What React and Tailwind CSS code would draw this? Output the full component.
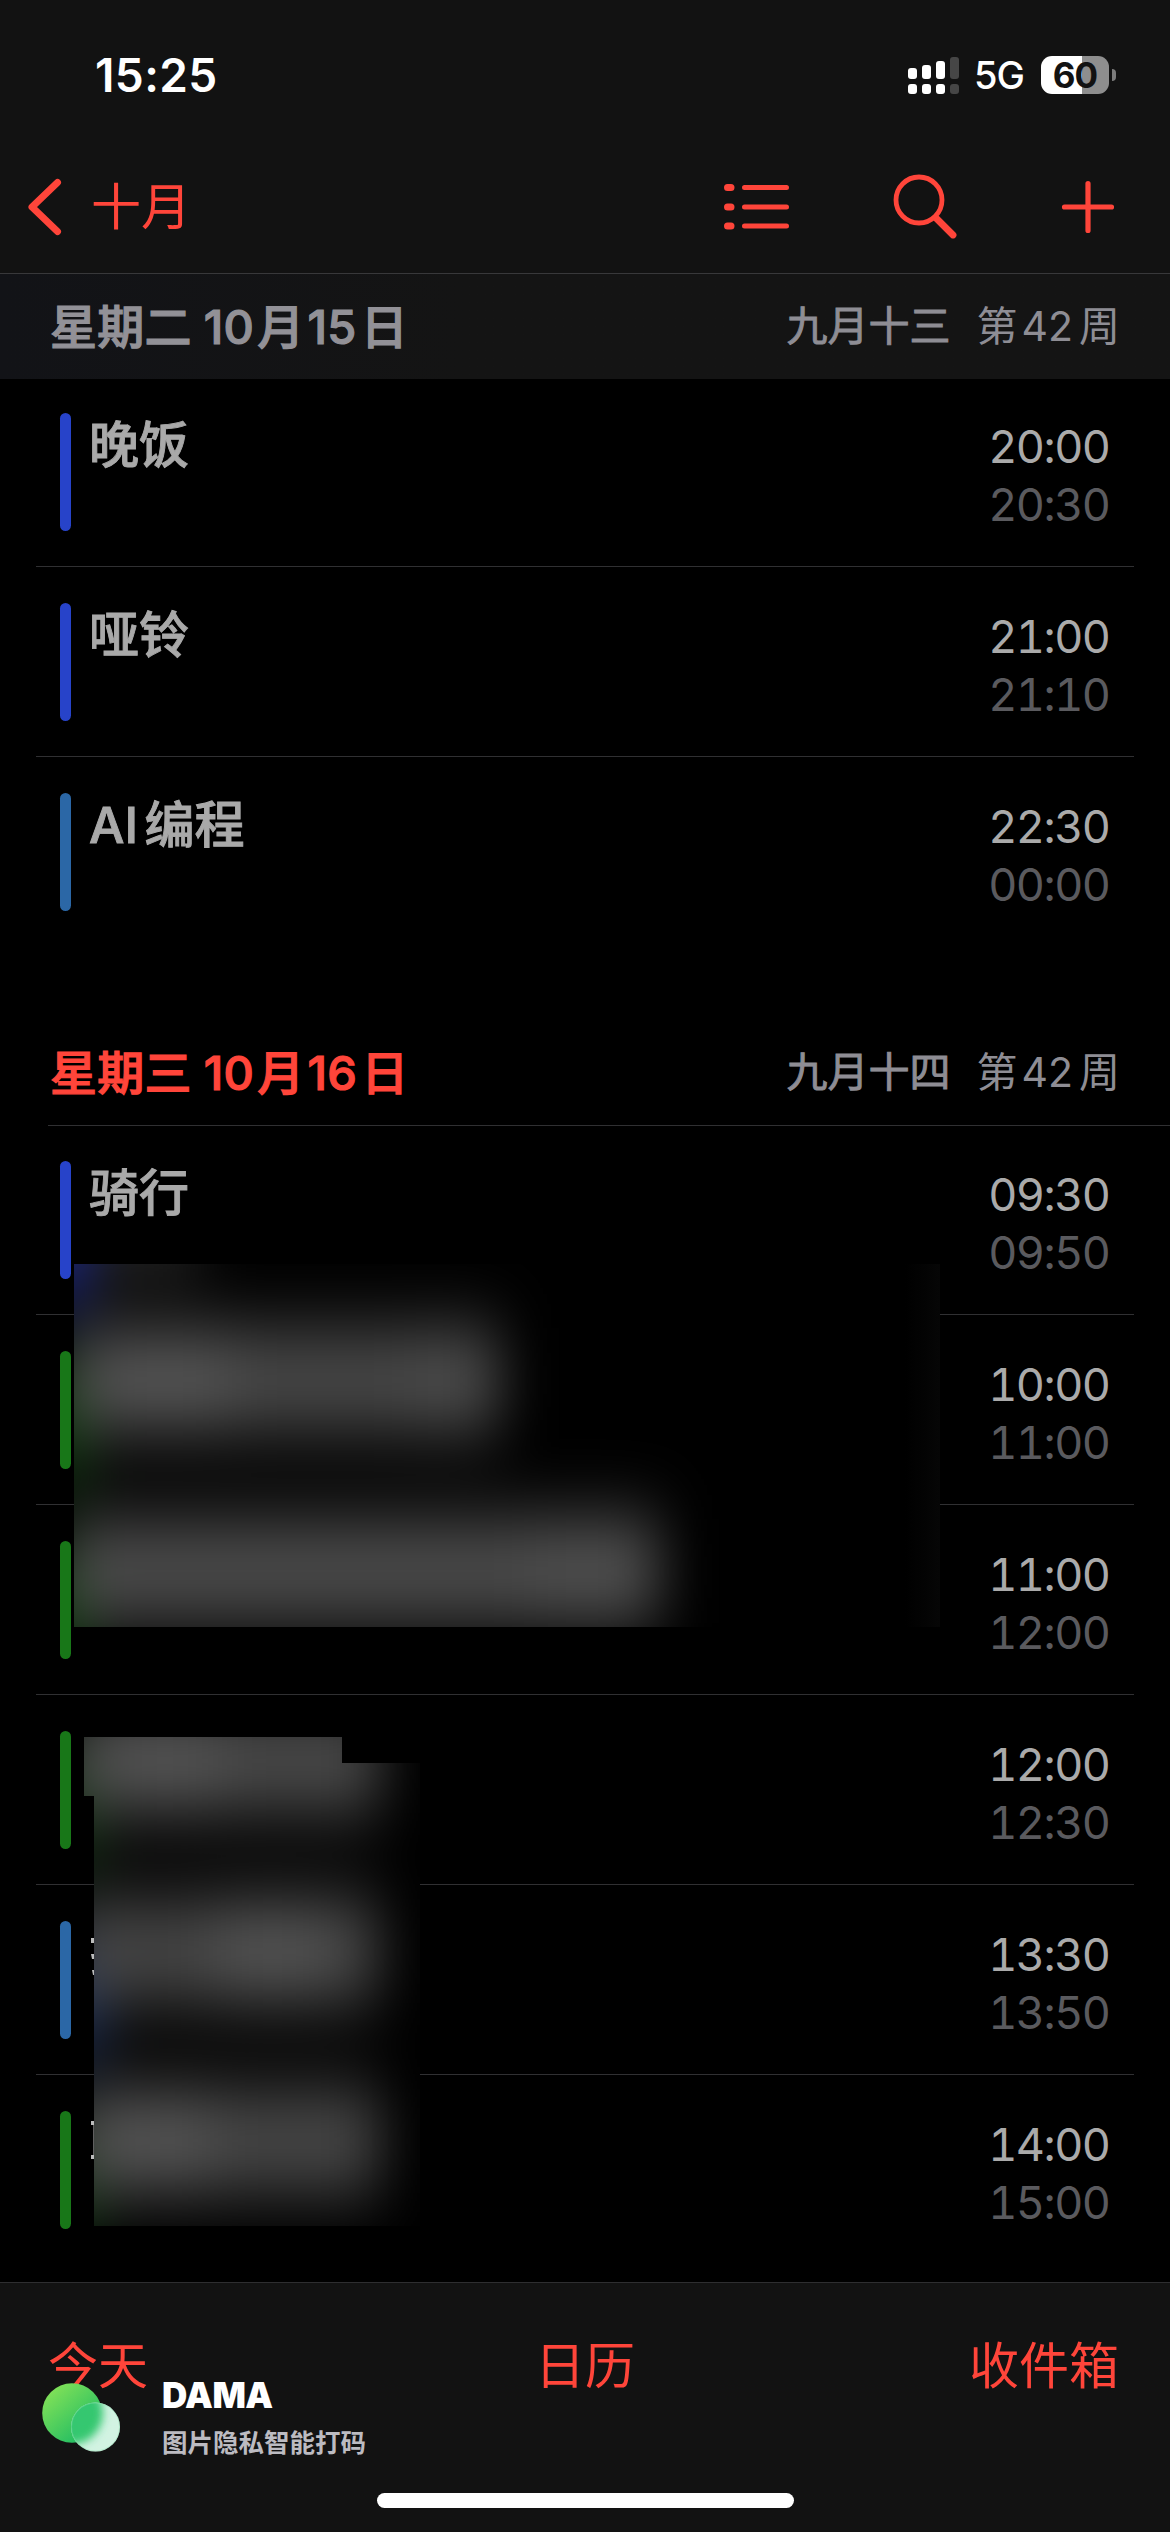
import { cva } from "class-variance-authority";

const sections = [
  {
    id: "1015",
    weekday: "星期二",
    month: "10",
    day: "15",
    lunar: "九月十三",
    week: "42",
    events: [
      { title: "晚饭", start: "20:00", end: "20:30", color: "blue" },
      { title: "哑铃", start: "21:00", end: "21:10", color: "blue" },
      { title: "AI 编程", start: "22:30", end: "00:00", color: "sky" },
    ],
  },
  {
    id: "1016",
    weekday: "星期三",
    month: "10",
    day: "16",
    lunar: "九月十四",
    week: "42",
    today: true,
    events: [
      { title: "骑行", start: "09:30", end: "09:50", color: "blue" },
      { start: "10:00", end: "11:00", color: "green" },
      { start: "11:00", end: "12:00", color: "green" },
      { start: "12:00", end: "12:30", color: "green" },
      { start: "13:30", end: "13:50", color: "sky" },
      { start: "14:00", end: "15:00", color: "green" },
    ],
  },
];

const bar = cva("ml-6 mt-9 h-[118px] w-[11px] shrink-0 rounded-full", {
  variants: {
    color: {
      blue: "bg-[#2743c9]",
      sky: "bg-[#2b67a6]",
      green: "bg-[#187718]",
    },
  },
});

const dayTitle = cva("text-[47px] font-medium leading-none tracking-[0.3px] [-webkit-text-stroke:1.2px_currentColor] [word-spacing:-1px]", {
  variants: {
    today: {
      true: "text-[#ff453a]",
      false: "text-[#929197]",
    },
  },
});

export default function App() {
  return (
    <div className="relative flex h-[2532px] w-[1170px] flex-col overflow-hidden bg-black font-['Inter','Noto_Sans_CJK_SC',sans-serif]">
      <header className="h-[274px] shrink-0 border-b border-[#38383a] bg-[#121212]">
        <StatusBar />
        <NavBar />
      </header>

      <main className="relative min-h-0 flex-1 overflow-hidden">
        {sections.map((s) => (
          <DaySection key={s.id} section={s} />
        ))}
        <Redactions />
      </main>

      <Toolbar />
      <Watermark />
    </div>
  );
}

function StatusBar() {
  return (
    <div className="flex h-[150px] items-center justify-between pl-[95px] pr-[54px]">
      <span className="text-[46px] font-semibold leading-none tracking-[0.4px] text-white">15:25</span>
      <div className="flex items-center">
        <svg className="h-[38px] w-[52px]" viewBox="0 0 52 38" fill="#fff">
          <rect x="0" y="12" width="9" height="11" rx="3" />
          <rect x="14" y="9" width="9" height="14" rx="3" />
          <rect x="28" y="5" width="9" height="18" rx="3" />
          <rect x="42" y="1" width="9" height="22" rx="3" opacity=".22" />
          <rect x="0" y="28" width="9" height="10" rx="3" />
          <rect x="14" y="28" width="9" height="10" rx="3" />
          <rect x="28" y="28" width="9" height="10" rx="3" />
          <rect x="42" y="28" width="9" height="10" rx="3" opacity=".22" />
        </svg>
        <span className="ml-[14px] w-[50px] text-[38px] font-medium leading-none tracking-[-1px] text-white">5G</span>
        <div className="ml-[17px] flex h-[38px] w-[68px] items-center justify-center rounded-[11px] bg-linear-to-r from-white from-60% to-[#8e8e8e] to-60%">
          <span className="text-[35px] font-bold leading-none tracking-[-1px] text-[#121212]">60</span>
        </div>
        <div className="ml-[3px] h-3 w-1 rounded-r-full bg-[#7c7c7c]" />
      </div>
    </div>
  );
}

function NavBar() {
  return (
    <nav className="flex h-[114px] items-center text-[#ff453a]">
      <svg className="ml-[26px] h-[64px] w-[40px]" viewBox="0 0 40 64" fill="none" stroke="currentColor" strokeWidth="7" strokeLinecap="round" strokeLinejoin="round">
        <path d="M31.5 7.5 6 32l25.500 24.500" />
      </svg>
      <span className="ml-[25px] text-[50px] leading-none">十月</span>

      <div className="ml-auto flex items-center pr-[55px]">
        <svg className="h-[64px] w-[66px]" viewBox="0 0 66 64" fill="none" stroke="currentColor" strokeLinecap="round">
          <path d="M4.500 12.500h3.500M4.500 32h3.500M4.500 51h3.500" strokeWidth="7" />
          <path d="M21.500 12.500h42M21.500 32h42M21.500 51h42" strokeWidth="5" />
        </svg>
        <svg className="ml-[102px] h-[76px] w-[66px]" viewBox="0 0 66 76" fill="none" stroke="currentColor" strokeLinecap="round">
          <circle cx="28" cy="31" r="23" strokeWidth="4.800" />
          <path d="m45.500 49.500 16.500 16.500" strokeWidth="6.800" />
        </svg>
        <svg className="ml-[104px] h-[54px] w-[54px]" viewBox="0 0 54 54" fill="none" stroke="currentColor" strokeWidth="5.200" strokeLinecap="round">
          <path d="M27 3.500v47M3.500 27h47" />
        </svg>
      </div>
    </nav>
  );
}

function DaySection({ section }) {
  return (
    <section className="mb-[73px]">
      {section.today ? (
        <div className="ml-12 flex h-[106px] items-center justify-between border-b border-[#303032] pl-0.5 pr-[50px]">
          <DayTitle section={section} />
        </div>
      ) : (
        <div className="flex h-[105px] items-center justify-between bg-linear-to-r from-[#121317] to-[#141414] to-40% pl-[50px] pr-[50px]">
          <DayTitle section={section} />
        </div>
      )}
      <ul className={section.today ? "-mt-px" : "-mt-0.5"}>
        {section.events.map((e) => (
          <EventRow key={e.start} event={e} />
        ))}
      </ul>
    </section>
  );
}

function DayTitle({ section }) {
  return (
    <>
      <h2 className={dayTitle({ today: !!section.today })}>
        {section.weekday} <span className="mr-[3px]">{section.month}</span>月
        <span className="ml-[3px] mr-1">{section.day}</span>日
      </h2>
      <div className="flex items-center text-[41px] leading-none text-[#8e8d94]">
        <span className="[-webkit-text-stroke:0.9px_currentColor]">{section.lunar}</span>
        <span className="ml-[26px]">第</span>
        <span className="ml-1 mr-1.5">{section.week}</span>
        <span>周</span>
      </div>
    </>
  );
}

function EventRow({ event }) {
  return (
    <li className="mx-9 flex h-[190px] border-b border-[#303032] last:border-transparent">
      <div className={bar({ color: event.color })} />
      <span className="ml-[18px] mt-10 text-[50px] font-medium leading-[56px] text-[#a9a9a9] [-webkit-text-stroke:0.9px_currentColor] [word-spacing:-7px]">
        {event.title}
      </span>
      <div className="ml-auto mt-10 pr-[24.5px] text-right text-[45px] leading-[59px] tracking-[-1.5px] tabular-nums">
        <div className="text-[#aaaaaa]">{event.start}</div>
        <div className="-mt-px text-[#5a5a5e]">{event.end}</div>
      </div>
    </li>
  );
}

// Blurred-out titles. Coordinates are those of the full screen.
function Redactions() {
  return (
    <svg className="absolute left-0 top-0 h-[2008px] w-[1170px]" viewBox="0 274 1170 2008">
      <defs>
        <filter id="smudge" filterUnits="userSpaceOnUse" x="-100" y="1000" width="1300" height="1500" colorInterpolationFilters="sRGB">
          <feGaussianBlur stdDeviation="27 36" />
        </filter>
        <clipPath id="upper">
          <rect x="74" y="1264" width="866" height="363" />
        </clipPath>
        <clipPath id="lower">
          <path d="M84 1737h258v26h78v463H94v-430H84z" />
        </clipPath>
        <linearGradient id="edge">
          <stop offset="0" stopColor="#060606" stopOpacity="0" />
          <stop offset="1" stopColor="#060606" />
        </linearGradient>
      </defs>

      <g clipPath="url(#upper)">
        <rect x="74" y="1264" width="866" height="363" fill="#000" />
        <g filter="url(#smudge)">
          <rect x="30" y="1180" width="60" height="114" fill="#1c2ba0" />
          <rect x="80" y="1190" width="120" height="76" fill="#2c2c2c" />
          <rect x="40" y="1360" width="46" height="118" fill="#0f4a0f" />
          <rect x="40" y="1550" width="46" height="118" fill="#0f4a0f" />
          <rect x="66" y="1328" width="434" height="104" fill="#4a4a4a" />
          <rect x="100" y="1336" width="130" height="84" fill="#5a5a5a" />
          <rect x="410" y="1336" width="82" height="86" fill="#505050" />
          <rect x="66" y="1519" width="594" height="104" fill="#4e4e4e" />
          <rect x="530" y="1526" width="116" height="88" fill="#545454" />
        </g>
        <rect x="905" y="1264" width="35" height="363" fill="url(#edge)" />
      </g>

      <g fill="#bdbdbd">
        <path d="M91 1938h4v5h-4zM91 1954h4v5h-3zM92 1970h3v5h-2z" />
        <path d="M91 2121h4v38h-4v-4h2.500v-30H91z" />
      </g>

      <g clipPath="url(#lower)">
        <rect x="84" y="1737" width="336" height="489" fill="#000" />
        <g filter="url(#smudge)">
          <rect x="50" y="1740" width="46" height="118" fill="#0f4210" />
          <rect x="50" y="1930" width="52" height="118" fill="#1a3572" />
          <rect x="50" y="2120" width="46" height="118" fill="#0f4210" />
          <rect x="66" y="1709" width="314" height="104" fill="#4c4c4c" />
          <rect x="110" y="1716" width="110" height="86" fill="#5a5a5a" />
          <rect x="66" y="1899" width="314" height="104" fill="#484848" />
          <rect x="215" y="1904" width="115" height="94" fill="#585858" />
          <rect x="66" y="2089" width="314" height="104" fill="#494949" />
          <rect x="100" y="2096" width="110" height="86" fill="#5a5a5a" />
        </g>
      </g>
    </svg>
  );
}

function Toolbar() {
  return (
    <footer className="flex h-[250px] shrink-0 flex-col items-center border-t border-[#2e2e30] bg-[#121212]">
      <div className="flex h-[165px] w-full items-center justify-between pl-12 pr-[51px] text-[50px] leading-none text-[#ff453a]">
        <span>今天</span>
        <span className="pl-[53px]">日历</span>
        <span>收件箱</span>
      </div>
      <div className="mt-[45px] h-[15px] w-[417px] rounded-full bg-white" />
    </footer>
  );
}

function Watermark() {
  return (
    <div className="absolute left-[42px] top-[2376px] flex">
      <svg className="mt-1.5 h-[72px] w-[80px]" viewBox="0 0 80 72">
        <defs>
          <linearGradient id="leaf" x1="0.100" y1="0.100" x2="0.800" y2="0.900">
            <stop offset="0" stopColor="#84e257" />
            <stop offset="1" stopColor="#1dbb63" />
          </linearGradient>
          <filter id="frost" x="-30%" y="-30%" width="160%" height="160%">
            <feGaussianBlur stdDeviation="4" />
          </filter>
          <clipPath id="lens">
            <circle cx="53.500" cy="45" r="24.500" />
          </clipPath>
        </defs>
        <circle cx="30" cy="31" r="29.800" fill="url(#leaf)" />
        <g clipPath="url(#lens)">
          <rect x="28" y="20" width="52" height="52" fill="#d2f3e2" />
          <circle cx="30" cy="31" r="31" fill="#35c76f" filter="url(#frost)" />
        </g>
        <circle cx="53.500" cy="45" r="24" fill="none" stroke="#8ce0ae" strokeOpacity=".4" />
      </svg>
      <div className="ml-[40px] flex flex-col">
        <span className="text-[35px] font-black leading-[38px] tracking-[-0.5px] text-white">DAMA</span>
        <span className="mt-[14px] text-[25.500px] font-bold leading-[30px] text-[#bcbbc1]">图片隐私智能打码</span>
      </div>
    </div>
  );
}
